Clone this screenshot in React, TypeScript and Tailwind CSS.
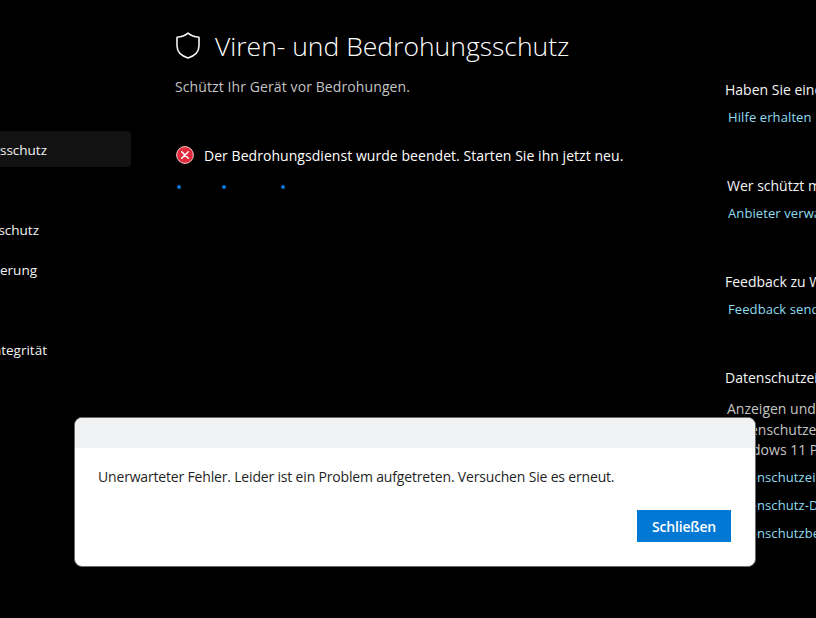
const font = "font-['Open_Sans',sans-serif]";

const NavRow = ({ label, active, className = "pr-[84px]" }: { label: string; active?: boolean; className?: string }) => (
  <div
    className={`flex items-center justify-end overflow-hidden whitespace-nowrap rounded-r text-[13.5px] text-[#f2f2f2] ${className} ${
      active ? "h-9 bg-[#121212] pt-0.5" : "h-10"
    }`}
  >
    <span className="shrink-0">{label}</span>
  </div>
);

const SideHeading = ({ children, className = "" }: { children: React.ReactNode; className?: string }) => (
  <div className={`h-6 whitespace-nowrap text-[14px] leading-6 text-[#f5f5f5] ${className}`}>{children}</div>
);

const SideLink = ({ children, className = "" }: { children: React.ReactNode; className?: string }) => (
  <div className={`ml-[3px] h-6 whitespace-nowrap text-[13px] leading-6 tracking-[0.1px] text-[#8fdcf0] ${className}`}>{children}</div>
);

export default function App() {
  return (
    <div className={`relative flex h-[618px] w-[816px] overflow-hidden bg-black ${font}`}>
      <aside className="w-[131px] shrink-0 pt-[131px]">
        <NavRow label="Viren- & Bedrohungsschutz" active />
        <div className="mt-[43px]">
          <NavRow label="Firewall- & Netzwerkschutz" className="pr-[92px]" />
          <NavRow label="App- & Browsersteuerung" className="pr-[94px]" />
          <div className="h-10" />
          <NavRow label="Kernintegrität" />
        </div>
      </aside>

      <main className="ml-[45px] w-[549px] shrink-0 pt-[31px]">
        <div className="flex h-[32px] items-center">
          <svg width="24" height="27" viewBox="0 0 24 27" fill="none" className="-mt-[3px] shrink-0">
            <path
              d="M12 1.2C8.8 3.9 5.2 5 1 5.2v8.6c0 5.6 3.7 9.9 11 12.2 7.3-2.3 11-6.6 11-12.2V5.2C18.8 5 15.200 3.900 12 1.200Z"
              stroke="#f5f5f5"
              strokeWidth="1.6"
              strokeLinejoin="round"
            />
          </svg>
          <h1 className="ml-[15px] whitespace-nowrap text-[26.5px] font-light text-white">
            Viren- und Bedrohungsschutz
          </h1>
        </div>
        <p className="-ml-px mt-[14px] h-5 text-[14px] leading-5 tracking-[0.1px] text-[#c4c4c4]">
          Schützt Ihr Gerät vor Bedrohungen.
        </p>
        <div className="mt-[46px] flex h-6 items-center">
          <svg width="18" height="18" viewBox="0 0 18 18" className="shrink-0">
            <circle cx="9" cy="9" r="8.4" fill="#e02b3c" stroke="#f4c6cb" strokeWidth="1" />
            <path d="M5.700 5.700l6.600 6.600M12.300 5.700l-6.600 6.600" stroke="#fff" strokeWidth="1.500" strokeLinecap="round" />
          </svg>
          <span className="ml-[10px] whitespace-nowrap text-[14px] tracking-[0.05px] text-white">
            Der Bedrohungsdienst wurde beendet. Starten Sie ihn jetzt neu.
          </span>
        </div>
        <div className="mt-[18px] flex pl-[1px]">
          <span className="h-1 w-1 rounded-full bg-[#0a74d0]" />
          <span className="ml-[41px] h-1 w-1 rounded-full bg-[#0a74d0]" />
          <span className="ml-[55px] h-1 w-1 rounded-full bg-[#0a74d0]" />
        </div>
      </main>

      <aside className="shrink-0 pt-[78px]">
        <SideHeading>Haben Sie eine Frage?</SideHeading>
        <SideLink className="mt-[3px]">Hilfe erhalten</SideLink>
        <SideHeading className="ml-0.5 mt-[45px]">Wer schützt mich?</SideHeading>
        <SideLink className="mt-[3px]">Anbieter verwalten</SideLink>
        <SideHeading className="mt-[45px]">Feedback zu Windows-Sicherheit</SideHeading>
        <SideLink className="mt-[3px]">Feedback senden</SideLink>
        <SideHeading className="mt-[45px]">Datenschutzeinstellungen</SideHeading>
        <div className="ml-0.5 mt-[9px] whitespace-nowrap text-[14px] leading-[20.5px] text-[#c4c4c4]">
          <div>Anzeigen und ändern der</div>
          <div>Datenschutzeinstellungen für</div>
          <div>Windows 11 Pro-Gerät.</div>
        </div>
        <SideLink className="mt-[4px]">Datenschutzeinstellungen</SideLink>
        <SideLink className="mt-1">Datenschutz-Dashboard</SideLink>
        <SideLink className="mt-1">Datenschutzbestimmungen</SideLink>
      </aside>

      <div className="absolute left-[74px] top-[417px] flex h-[150px] w-[682px] flex-col overflow-hidden rounded-lg border border-[#6a6a6a] bg-white">
        <div className="h-[30px] shrink-0 bg-[#f1f2f4]" />
        <p className="ml-[23px] mt-[19px] whitespace-nowrap text-[14px] leading-5 tracking-[-0.175px] text-[#1f1f1f]">
          Unerwarteter Fehler. Leider ist ein Problem aufgetreten. Versuchen Sie es erneut.
        </p>
        <div className="mr-[24px] mt-[23px] flex justify-end">
          <button className="h-[32px] w-[94px] bg-[#0078d4] text-[14px] font-semibold tracking-[-0.2px] text-white">
            Schließen
          </button>
        </div>
      </div>
    </div>
  );
}
